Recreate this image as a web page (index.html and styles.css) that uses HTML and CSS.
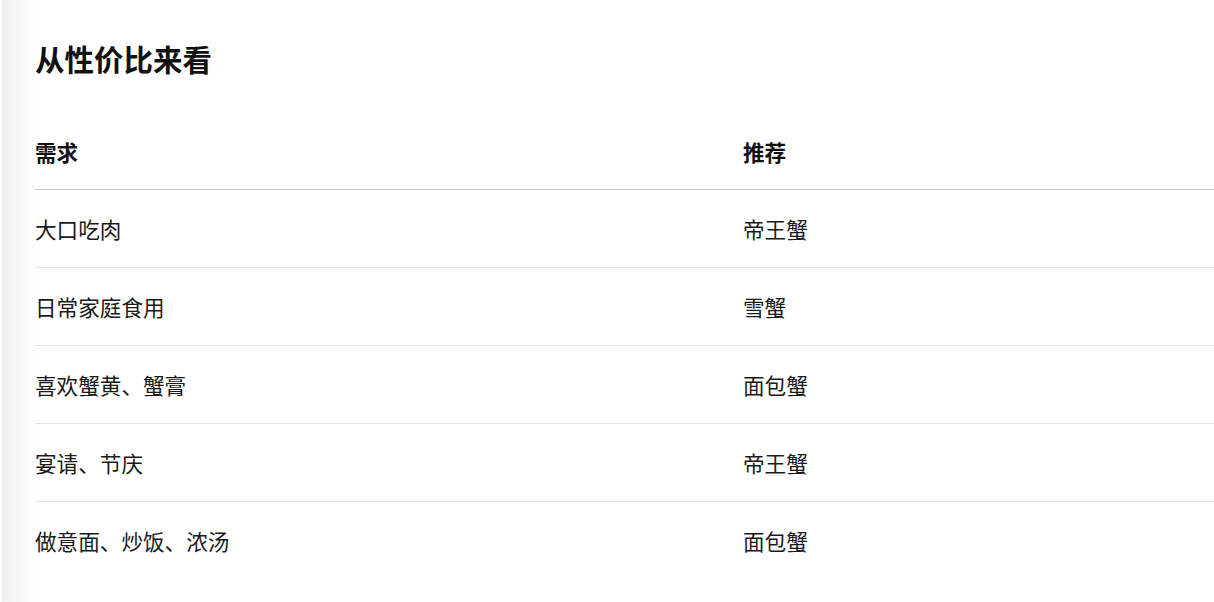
FILE: index.html
```html
<!DOCTYPE html>
<html lang="zh-CN">
<head>
<meta charset="utf-8">
<title>从性价比来看</title>
<link rel="stylesheet" href="styles.css">
</head>
<body>
<div class="page">
  <div class="panel">
    <h2 class="title">从性价比来看</h2>
    <table class="compare">
      <thead>
        <tr><th class="col-need">需求</th><th>推荐</th></tr>
      </thead>
      <tbody>
        <tr><td>大口吃肉</td><td>帝王蟹</td></tr>
        <tr><td>日常家庭食用</td><td>雪蟹</td></tr>
        <tr><td>喜欢蟹黄、蟹膏</td><td>面包蟹</td></tr>
        <tr><td>宴请、节庆</td><td>帝王蟹</td></tr>
        <tr><td>做意面、炒饭、浓汤</td><td>面包蟹</td></tr>
      </tbody>
    </table>
  </div>
</div>
</body>
</html>
```

FILE: styles.css
```css
html, body {
  margin: 0;
  padding: 0;
  background: #fff;
}
body {
  font-family: "Noto Sans CJK SC", "Noto Sans", sans-serif;
  color: #1a1a1a;
}
.page {
  padding-left: 2px;
  min-height: 602px;
  box-sizing: border-box;
  display: flex;
}
.panel {
  flex: 1;
  padding: 38px 0 0 33px;
  background: linear-gradient(to right, #efefef 0px, #f7f7f7 14px, #ffffff 34px);
}
.title {
  margin: 0;
  font-size: 29.5px;
  line-height: 40px;
  font-weight: 700;
  color: #111;
}
.compare {
  margin-top: 37px;
  width: 100%;
  border-collapse: collapse;
  font-size: 21.6px;
  line-height: 30px;
}
.compare th {
  text-align: left;
  font-weight: 700;
  padding: 22px 0 22px 0;
  border-bottom: 1px solid #cbcbcb;
  color: #111;
}
.compare .col-need {
  width: 708px;
}
.compare td {
  padding: 24px 0 23px 0;
  border-bottom: 1px solid #e2e2e2;
}
.compare tbody tr:last-child td {
  border-bottom: none;
}
```
